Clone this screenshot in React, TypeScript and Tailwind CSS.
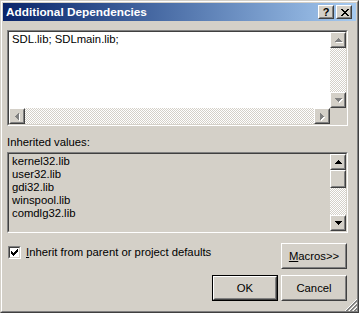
import type { ReactNode } from 'react';

type Dir = 'up' | 'down' | 'left' | 'right';

function Raised({ className = '', children }: { className?: string; children?: ReactNode }) {
  return (
    <div className={`border border-t-white border-l-white border-r-[#404040] border-b-[#404040] bg-[#d4d0c8] ${className}`}>
      <div className="flex h-full w-full items-center justify-center border border-t-[#d4d0c8] border-l-[#d4d0c8] border-r-[#808080] border-b-[#808080]">
        {children}
      </div>
    </div>
  );
}

function Sunken({ className = '', children }: { className?: string; children?: ReactNode }) {
  return (
    <div className={`border border-t-[#808080] border-l-[#808080] border-r-white border-b-white ${className}`}>
      <div className="flex h-full w-full flex-col border border-t-[#404040] border-l-[#404040] border-r-[#d4d0c8] border-b-[#d4d0c8]">
        {children}
      </div>
    </div>
  );
}

// classic 7x4 scroll arrow, drawn pixel by pixel
function Arrow({ dir, disabled }: { dir: Dir; disabled?: boolean }) {
  const rows = [
    [3, 1],
    [2, 3],
    [1, 5],
    [0, 7],
  ];
  const vertical = dir === 'up' || dir === 'down';
  const w = vertical ? 7 : 4;
  const h = vertical ? 4 : 7;
  const shapes = (dx: number, dy: number, fill: string) =>
    rows.map(([o, len], i) => {
      let x = 0;
      let y = 0;
      let rw = 1;
      let rh = 1;
      if (dir === 'up') { x = o; y = i; rw = len; }
      if (dir === 'down') { x = o; y = 3 - i; rw = len; }
      if (dir === 'left') { x = i; y = o; rh = len; }
      if (dir === 'right') { x = 3 - i; y = o; rh = len; }
      return <rect key={fill + i} x={x + dx} y={y + dy} width={rw} height={rh} fill={fill} />;
    });
  return (
    <svg width={w + 1} height={h + 1} shapeRendering="crispEdges" className="block">
      {disabled && shapes(1, 1, '#ffffff')}
      {shapes(0, 0, disabled ? '#808080' : '#000000')}
    </svg>
  );
}

function ScrollButton({ dir, disabled }: { dir: Dir; disabled?: boolean }) {
  return (
    <Raised className="h-[16px] w-[16px] shrink-0">
      <div className="pl-px pt-px">
        <Arrow dir={dir} disabled={disabled} />
      </div>
    </Raised>
  );
}

function Track({ className = '' }: { className?: string }) {
  return (
    <div
      className={`bg-[image:repeating-conic-gradient(#d4d0c8_0%_25%,#ffffff_0%_50%)] bg-[length:2px_2px] ${className}`}
    />
  );
}

function CheckMark() {
  const cols = [2, 3, 4, 3, 2, 1, 0];
  return (
    <svg width="7" height="7" shapeRendering="crispEdges" className="block">
      {cols.map((y, x) => (
        <rect key={x} x={x} y={y} width="1" height="3" fill="#000" />
      ))}
    </svg>
  );
}

function CloseGlyph() {
  const rows = [
    [[0, 2], [6, 2]],
    [[1, 2], [5, 2]],
    [[2, 4]],
    [[3, 2]],
    [[2, 4]],
    [[1, 2], [5, 2]],
    [[0, 2], [6, 2]],
  ];
  return (
    <svg width="8" height="7" shapeRendering="crispEdges" className="block">
      {rows.map((segs, y) =>
        segs.map(([x, w], j) => <rect key={`${y}-${j}`} x={x} y={y} width={w} height="1" fill="#000" />)
      )}
    </svg>
  );
}

function SizeGrip() {
  const lines = [
    { t: 0, c: '#ffffff' },
    { t: 1, c: '#808080' },
    { t: 2, c: '#808080' },
    { t: 4, c: '#ffffff' },
    { t: 5, c: '#808080' },
    { t: 6, c: '#808080' },
    { t: 8, c: '#ffffff' },
    { t: 9, c: '#808080' },
    { t: 10, c: '#808080' },
  ];
  return (
    <svg width="12" height="12" shapeRendering="crispEdges" className="block">
      {lines.map((l) => (
        <line key={l.t} x1={l.t} y1={12} x2={12} y2={l.t} stroke={l.c} strokeWidth="1" />
      ))}
    </svg>
  );
}

const inherited = ['kernel32.lib', 'user32.lib', 'gdi32.lib', 'winspool.lib', 'comdlg32.lib'];

export default function App() {
  return (
    <div className="h-[313px] w-[359px] bg-[#d4d0c8] font-['Liberation_Sans',Arial,sans-serif] text-[11.3px] leading-[13px] text-black">
      <div className="h-full border border-t-[#d4d0c8] border-l-[#d4d0c8] border-r-[#404040] border-b-[#404040]">
        <div className="relative flex h-full flex-col border border-t-white border-l-white border-r-[#808080] border-b-[#808080] p-px">
          {/* Title bar */}
          <div className="flex h-[18px] shrink-0 items-center bg-gradient-to-r from-[#0a246a] to-[#a6caf0] pl-[3px] pr-[4px]">
            <span className="text-[11.8px] font-bold text-white">Additional Dependencies</span>
            <div className="ml-auto flex gap-[2px]">
              <Raised className="h-[14px] w-[16px]">
                <span className="text-[11px] font-bold leading-[10px]">?</span>
              </Raised>
              <Raised className="h-[14px] w-[16px]">
                <div className="pl-px">
                  <CloseGlyph />
                </div>
              </Raised>
            </div>
          </div>

          {/* Body */}
          <div className="flex flex-1 flex-col pl-[4px] pr-[8px] pt-[9px]">
            <Sunken className="h-[96px] w-[341px] bg-white">
              <div className="flex flex-1">
                <div className="flex-1 pl-[3px] pt-px">SDL.lib; SDLmain.lib;</div>
                <div className="flex w-[16px] flex-col">
                  <ScrollButton dir="up" disabled />
                  <Track className="flex-1" />
                  <ScrollButton dir="down" disabled />
                </div>
              </div>
              <div className="flex h-[16px]">
                <ScrollButton dir="left" disabled />
                <Track className="flex-1" />
                <ScrollButton dir="right" disabled />
                <div className="w-[16px] bg-[#d4d0c8]" />
              </div>
            </Sunken>

            <div className="mt-[10px]">Inherited values:</div>

            <Sunken className="mt-[3px] h-[81px] w-[341px]">
              <div className="flex flex-1">
                <div className="flex-1 pl-[3px] pt-px">
                  {inherited.map((item) => (
                    <div key={item}>{item}</div>
                  ))}
                </div>
                <div className="flex w-[16px] flex-col">
                  <ScrollButton dir="up" />
                  <Raised className="h-[18px] w-[16px] shrink-0" />
                  <Track className="flex-1" />
                  <ScrollButton dir="down" />
                </div>
              </div>
            </Sunken>

            <div className="mt-[10px] mr-px flex">
              <div className="mt-[3px] ml-px flex h-[13px] items-center gap-[5px] self-start">
                <Sunken className="h-[13px] w-[13px] bg-white">
                  <div className="pl-px pt-px">
                    <CheckMark />
                  </div>
                </Sunken>
                <span>
                  <span className="underline">I</span>nherit from parent or project defaults
                </span>
              </div>
              <Raised className="ml-auto h-[26px] w-[66px]">
                <span>
                  <span className="underline">M</span>acros&gt;&gt;
                </span>
              </Raised>
            </div>

            <div className="mt-[6px] mr-px flex justify-end gap-[3px]">
              <div className="h-[26px] w-[66px] border border-black">
                <Raised className="h-full w-full">
                  <span>OK</span>
                </Raised>
              </div>
              <Raised className="h-[26px] w-[66px]">
                <span>Cancel</span>
              </Raised>
            </div>
          </div>

          <div className="absolute right-0 bottom-0">
            <SizeGrip />
          </div>
        </div>
      </div>
    </div>
  );
}
